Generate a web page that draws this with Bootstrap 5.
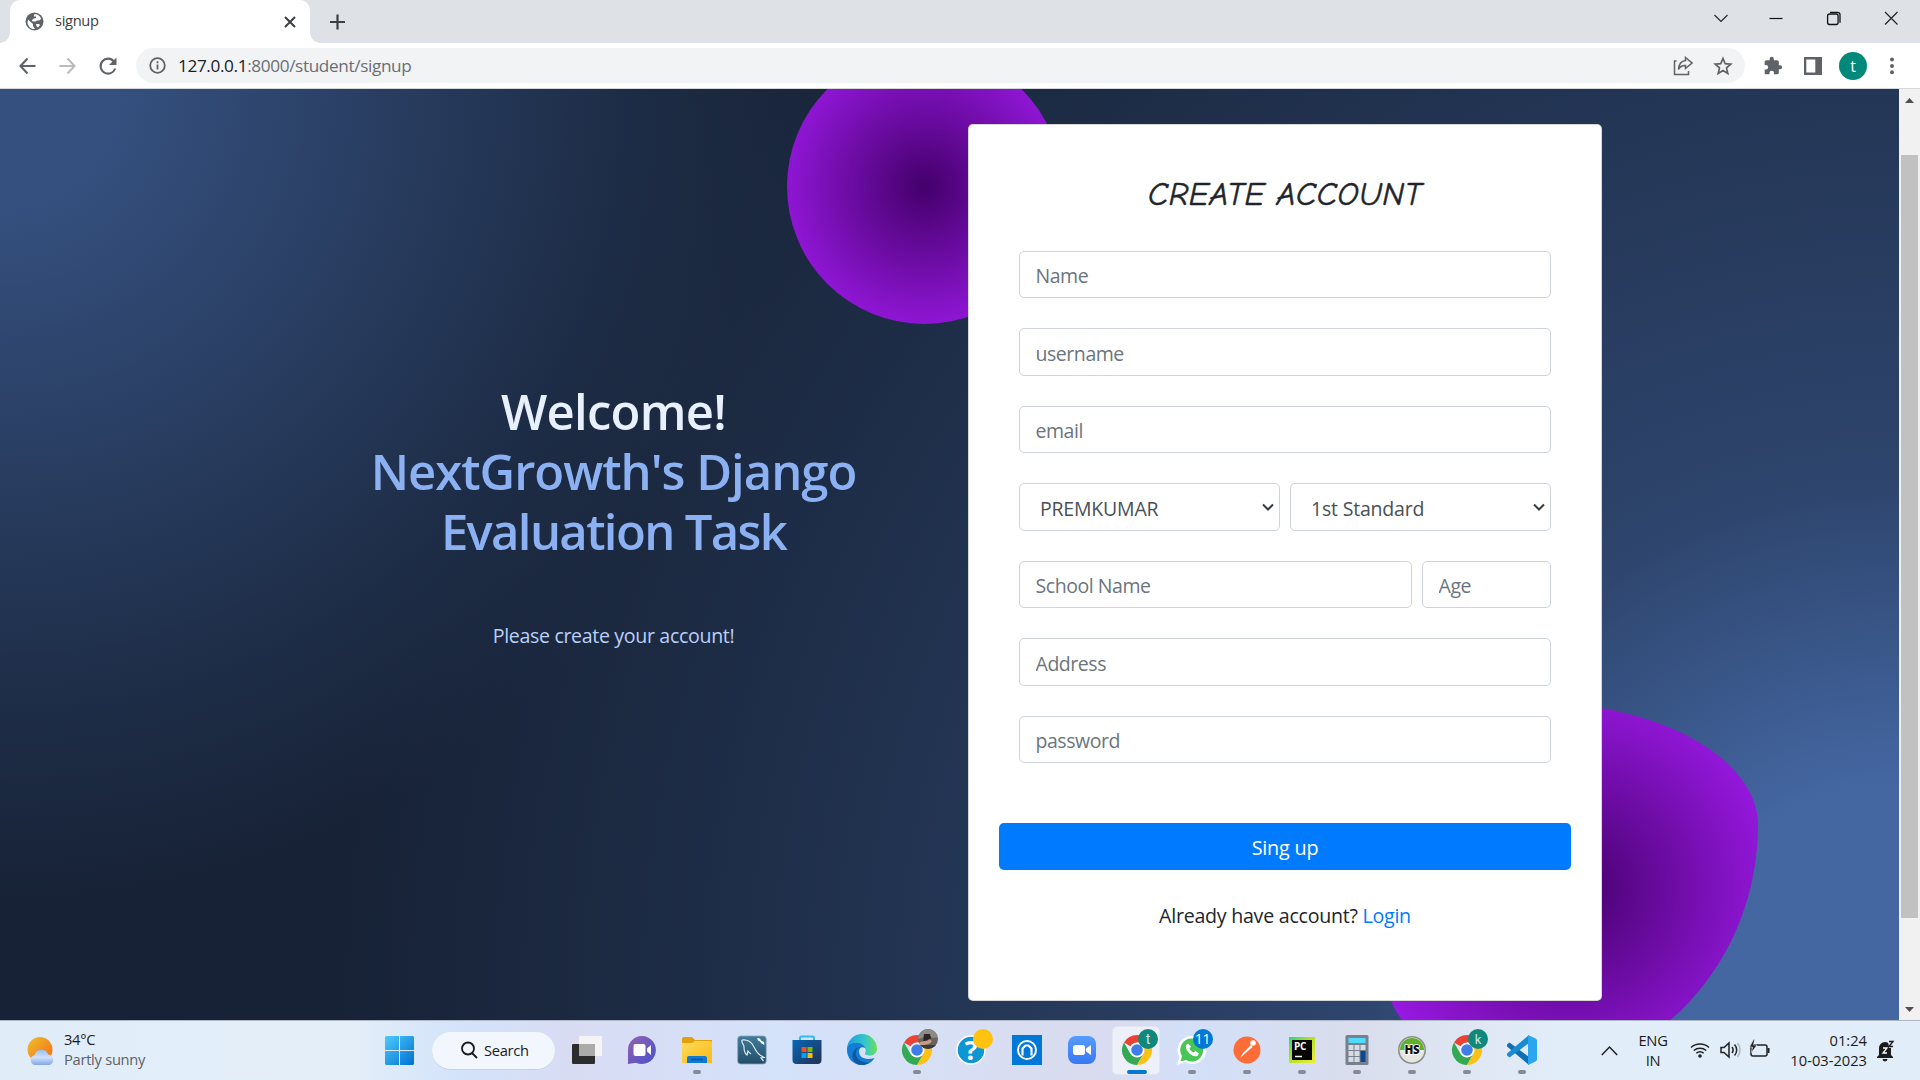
<!DOCTYPE html>
<html lang="en">
<head>
<meta charset="utf-8">
<title>signup</title>
<meta name="viewport" content="width=device-width, initial-scale=1">
<link href="https://cdn.jsdelivr.net/npm/bootstrap@5.3.0/dist/css/bootstrap.min.css" rel="stylesheet">
<style>
html{font-size:20px}
body{font-family:"Segoe UI","Open Sans",sans-serif;font-size:19.6px;letter-spacing:-.34px;width:1920px;height:1080px;overflow:hidden;background:#fff;color:#212529}
svg{display:block;flex:none}
.tabstrip{height:43px;background:#dee1e6;padding-left:10px}
.tab-active{width:300px;height:43px;background:#fff;border-radius:10px 10px 0 0;position:relative;padding:0 13px 0 15px;font-size:14.7px;color:#3c4043}
.tab-active::before,.tab-active::after{content:"";position:absolute;bottom:0;width:10px;height:10px}
.tab-active::before{left:-10px;background:radial-gradient(circle at 0 0,transparent 9.5px,#fff 10px)}
.tab-active::after{right:-10px;background:radial-gradient(circle at 100% 0,transparent 9.5px,#fff 10px)}
.tab-title{margin:-2px 0 0 11px}
.plus{margin-left:16px}
.winctl{padding-top:9px;padding-right:22px;gap:38px}
.toolbar-row{height:46px;border-bottom:1px solid #d5d7da;padding:5px 0 5px 16px}
.omni{width:1609px;height:35px;border-radius:18px;background:#f1f3f4;margin-left:17px;padding:0 12px 0 13px;font-size:17.2px;letter-spacing:-.37px;color:#6a6e73}
.omni b{font-weight:400;color:#202124}
.avatar-t{width:28px;height:28px;border-radius:50%;background:#00897b;color:#fff;font-size:16px}
.viewport-row{height:931px}
.page-view{width:1899px;overflow:hidden;background-color:hsl(218,41%,15%);
background-image:radial-gradient(812.5px circle at 0% 0%,hsl(218,41%,35%) 15%,hsl(218,41%,30%) 35%,hsl(218,41%,20%) 75%,hsl(218,41%,19%) 80%,transparent 100%),radial-gradient(1562.5px circle at 100% 100%,hsl(218,41%,45%) 15%,hsl(218,41%,30%) 35%,hsl(218,41%,20%) 75%,hsl(218,41%,19%) 80%,transparent 100%)}
.hero{padding:35px 0 0 259px}
.intro{width:709px;padding-top:257px}
.intro h1{font-size:49px;line-height:60px;font-weight:600;letter-spacing:-.75px;color:hsl(218,81%,95%);margin-bottom:60px}
.intro h1 span{color:hsl(218,81%,75%);letter-spacing:-1px}
.intro h1 .line-3{letter-spacing:-1.65px}
.intro p{color:hsl(218,81%,85%);line-height:30px}
.form-col{width:634px;height:877px}
.shape-a{position:absolute;width:275px;height:275px;top:-75px;left:-181px;border-radius:50%;background:radial-gradient(#44006b,#ad1fff)}
.shape-b{position:absolute;width:375px;height:375px;bottom:-75px;left:415px;border-radius:38% 62% 63% 37%/70% 33% 67% 30%;background:radial-gradient(#44006b,#ad1fff)}
.form-card{height:877px;border:1px solid rgba(0,0,0,.16);border-radius:5px;padding:46px 30px 0;position:relative;background:#fff}
.form-card h3{font-family:"Comic Sans MS","Comic Neue",Lato,sans-serif;font-style:italic;font-size:33px;line-height:46px;letter-spacing:.45px;-webkit-text-stroke:.5px #212529;margin:0 0 33.5px}
.fields{padding:0 20px;display:flex;flex-direction:column;gap:30px}
.fields .form-control,.fields .form-select{height:47.5px;border:1px solid #ced4da;border-radius:5px;font-size:19.5px;letter-spacing:-.45px;padding:9px 15px 6px 15.5px;color:#495057}
.fields .form-control::placeholder{color:#6c757d;opacity:1}
.fields .form-select{padding-left:20px;letter-spacing:-.2px;background-image:none}
.pick{position:relative;width:261px}
.pick svg{position:absolute;right:6px;top:20px}
.btn-sign{height:47px;border-radius:5px;background:#007bff;border:0;color:#fff;margin-top:60px;font-size:19.8px;letter-spacing:-.2px;padding:3px 0 0}
.below{margin-top:31px;line-height:30px;letter-spacing:-.25px}
.below a{color:#007bff;text-decoration:none}
.scroll-track{width:21px;background:#f1f1f1;padding:9px 2px 8px}
.scroll-thumb{width:17px;height:763px;margin-top:52px;background:#c1c1c1}
.taskbar{height:60px;border-top:1px solid #b0b8c6;background:linear-gradient(90deg,#e0edf8 0,#e3eef8 350px,#d3e3fa 460px,#d8dcf3 570px,#d4e2fa 780px,#d8dff4 960px,#d9dbee 1090px,#d3e0f9 1190px,#d9dded 1350px,#e0e9f5 1500px,#e1edf8 1560px);color:#1b1b1b;font-size:14.7px;letter-spacing:-.28px}
.wx{width:385px;padding-left:27px;gap:9px}
.wx,.clock,.lang{line-height:20px}
.wx>div{margin-top:-3px}
.clock,.lang{margin-top:-2px}
.search-pill{width:123px;height:38px;border-radius:19px;background:#f2f6fd;border-bottom:1px solid #c8d1e3;margin:0 4px 0 18px;padding-left:28px;gap:6px}
.task{width:55px;height:59px;position:relative}
.task.on::after{content:"";position:absolute;left:23.5px;top:49px;width:8px;height:4px;border-radius:2px;background:#858a95}
.task.active::before{content:"";position:absolute;left:3px;top:5px;width:48px;height:49px;border-radius:5px;background:#edf0f8;border:1px solid #e3e6f0}
.task.active::after{left:17.5px;width:20px;background:#0078d4}
.task svg{position:relative;overflow:visible;margin-top:-1px}
.lang{width:40px;margin-left:15px}
.clock{width:86px;margin-left:11px;letter-spacing:0}
</style>
</head>
<body>
<svg width="0" height="0" class="position-absolute">
<defs>
<g id="chrome"><path d="M15 15 2 7.5A15 15 0 0 1 28 7.5L15 7.5Z" fill="#ea4335"/><path d="M2 7.5A15 15 0 0 0 15 30L21.5 18.7 8.5 18.7Z" fill="#34a853"/><path d="M28 7.5A15 15 0 0 1 15 30L21.5 18.7 15 7.5Z" fill="#fbc116"/><circle cx="15" cy="15" r="7.5" fill="#fff"/><circle cx="15" cy="15" r="5.8" fill="#3f7ee8"/></g>
<linearGradient id="gw" x1="0" y1="0" x2="1" y2="1"><stop offset="0" stop-color="#4fcbfd"/><stop offset="1" stop-color="#006fd0"/></linearGradient>
<linearGradient id="gs" x1="0" y1="0" x2="1" y2="1"><stop offset="0" stop-color="#f0c030"/><stop offset="1" stop-color="#f26a10"/></linearGradient>
<linearGradient id="gc" x1="0" y1="0" x2="0" y2="1"><stop offset="0" stop-color="#9bbcf0"/><stop offset=".5" stop-color="#cfe0fb"/><stop offset="1" stop-color="#84a6e8"/></linearGradient>
<linearGradient id="gt" x1="0" y1="0" x2="1" y2="1"><stop offset="0" stop-color="#9563ae"/><stop offset="1" stop-color="#4750cf"/></linearGradient>
<linearGradient id="gf" x1="0" y1="0" x2="1" y2="1"><stop offset="0" stop-color="#ffdb61"/><stop offset="1" stop-color="#fbb911"/></linearGradient>
<linearGradient id="gst" x1="0" y1="0" x2="1" y2="1"><stop offset="0" stop-color="#0867b8"/><stop offset="1" stop-color="#25304f"/></linearGradient>
<linearGradient id="ge" x1="0" y1="0" x2="1" y2="0"><stop offset="0" stop-color="#1b9de0"/><stop offset=".6" stop-color="#35c7c9"/><stop offset="1" stop-color="#6be054"/></linearGradient>
<linearGradient id="gp" x1="0" y1="0" x2="1" y2="1"><stop offset="0" stop-color="#20d888"/><stop offset=".4" stop-color="#a9e026"/><stop offset="1" stop-color="#f3ec36"/></linearGradient>
<linearGradient id="gz" x1="0" y1="0" x2="0" y2="1"><stop offset="0" stop-color="#559cff"/><stop offset="1" stop-color="#3978f2"/></linearGradient>
<linearGradient id="gm" x1="0" y1="0" x2="0" y2="1"><stop offset="0" stop-color="#3f7c9b"/><stop offset="1" stop-color="#234e69"/></linearGradient>
</defs>
</svg>

<header>
<div class="tabstrip d-flex">
  <div class="tab-active d-flex align-items-center">
    <svg width="19" height="19" viewBox="0 0 19 19"><circle cx="9.5" cy="9.5" r="9" fill="#5f6368"/><path d="M3 7.500 8 12v2l2 3c-4 .5-7-2.500-7.500-6zM9 2.500c3-.8 6 1 7.200 4.500L14 8.500h-2l-1.500 1h-3L7 8l2-1.500 2-.5V4.500H9zM11 12h3l1 1-2 2.500-1.500-1z" fill="#fff"/></svg>
    <span class="tab-title flex-grow-1">signup</span>
    <svg width="14" height="14" viewBox="0 0 14 14" stroke="#3c4043" stroke-width="2"><path d="M2 2l10 10M12 2 2 12"/></svg>
  </div>
  <svg class="plus align-self-center" width="24" height="16" viewBox="0 0 24 16" stroke="#3c4043" stroke-width="2.200"><path d="M11.500 .5v15M4 8h15"/></svg>
  <div class="winctl d-flex ms-auto">
    <svg style="margin-right:3px" width="14" height="18" viewBox="0 0 14 18" fill="none" stroke="#222" stroke-width="1.100"><path d="M.5 6 7 12.500 13.500 6"/></svg>
    <svg style="margin-right:3px" width="14" height="18" viewBox="0 0 14 18" stroke="#111" stroke-width="1.200"><path d="M.5 9.500h13"/></svg>
    <svg width="20" height="18" viewBox="0 0 20 18" fill="none" stroke="#111" stroke-width="1.300"><rect x="3.600" y="5" width="10.500" height="10.500" rx="2"/><path d="M6 3.300h7.500a2.500 2.500 0 0 1 2.500 2.500v8"/></svg>
    <svg width="16" height="18" viewBox="0 0 16 18" stroke="#222" stroke-width="1.200"><path d="M3 3l12.500 12.500M15.500 3 3 15.500"/></svg>
  </div>
</div>
<div class="toolbar-row d-flex align-items-center">
  <svg width="103" height="24" viewBox="0 0 103 24" fill="none" stroke="#5f6368" stroke-width="2.100"><path d="M19.500 12H4.500M11.500 4.500 4.500 12l7 7.500"/><path stroke="#babcbe" d="M43.500 12h15M51.500 4.500l7 7.500-7 7.500"/><path d="M98 7.500a7.500 7.500 0 1 0 1.200 7"/><path fill="#5f6368" stroke="none" d="M100.500 3.500v7.500H93z"/></svg>
  <div class="omni d-flex align-items-center">
    <svg width="17" height="17" viewBox="0 0 17 17" fill="none" stroke="#5f6368" stroke-width="1.800"><circle cx="8.500" cy="8.500" r="7.300"/><path d="M8.500 7.500v5M8.500 4.300v1.900"/></svg>
    <span class="flex-grow-1" style="margin-left:12px"><b>127.0.0.1</b>:8000/student/signup</span>
    <svg width="20" height="20" viewBox="0 0 20 20" fill="none" stroke="#5f6368" stroke-width="1.500"><path d="M3.500 5H1.500v13.500h14V15"/><path d="M12.500 1.500 19 7l-6.500 5.500V9.500C9 9.300 7 10.500 5.500 13.500 5.800 8.500 8.500 5 12.500 4.500z"/></svg>
    <svg style="margin-left:20px" width="20" height="20" viewBox="0 0 20 20" fill="none" stroke="#5f6368" stroke-width="1.700"><path d="m10 2.500 2.200 5.200 5.600.5-4.300 3.700 1.300 5.500L10 14.500l-4.800 2.900 1.300-5.500L2.200 8.200l5.600-.5z"/></svg>
  </div>
  <svg style="margin-left:18px" width="20" height="20" viewBox="0 0 24 24" fill="#5f6368"><path d="M20.500 11H19V7a2 2 0 0 0-2-2h-4V3.500a2.500 2.500 0 0 0-5 0V5H4a2 2 0 0 0-2 2v3.800h1.500a2.700 2.700 0 0 1 0 5.400H2V20c0 1.100.9 2 2 2h3.800v-1.500a2.700 2.700 0 0 1 5.400 0V22H17a2 2 0 0 0 2-2v-4h1.500a2.500 2.500 0 0 0 0-5z"/></svg>
  <svg style="margin-left:21px" width="18" height="18" viewBox="0 0 18 18"><path d="M0 0h18v18H0zM2.300 2.500v13h9v-13z" fill="#5f6368" fill-rule="evenodd"/></svg>
  <div class="avatar-t d-flex align-items-center justify-content-center" style="margin-left:17px">t</div>
  <svg style="margin-left:22px" width="6" height="18" viewBox="0 0 6 18" fill="#5f6368"><circle cx="3" cy="2.500" r="2"/><circle cx="3" cy="9" r="2"/><circle cx="3" cy="15.300" r="2"/></svg>
</div>
</header>

<main class="viewport-row d-flex">
<div class="page-view">
<section class="hero d-flex">
  <div class="intro text-center">
    <h1>Welcome!<br><span>NextGrowth's Django</span><br><span class="line-3">Evaluation Task</span></h1>
    <p>Please create your account!</p>
  </div>
  <div class="form-col position-relative">
    <div class="shape-a"></div>
    <div class="shape-b"></div>
    <form class="form-card text-center">
      <h3>CREATE ACCOUNT</h3>
      <div class="fields">
        <input class="form-control" placeholder="Name">
        <input class="form-control" placeholder="username">
        <input class="form-control" placeholder="email">
        <div class="d-flex justify-content-between">
          <div class="pick"><select class="form-select"><option>PREMKUMAR</option></select><svg width="12" height="9" viewBox="0 0 12 9" fill="none" stroke="#343a40" stroke-width="2"><path d="m1 1.500 5 5 5-5"/></svg></div>
          <div class="pick"><select class="form-select"><option>1st Standard</option></select><svg width="12" height="9" viewBox="0 0 12 9" fill="none" stroke="#343a40" stroke-width="2"><path d="m1 1.500 5 5 5-5"/></svg></div>
        </div>
        <div class="d-flex" style="gap:10px">
          <input class="form-control" placeholder="School Name">
          <input class="form-control flex-shrink-0" style="width:129px" placeholder="Age">
        </div>
        <input class="form-control" placeholder="Address">
        <input class="form-control" placeholder="password">
      </div>
      <button type="button" class="btn btn-sign w-100">Sing up</button>
      <div class="below">Already have account? <a href="#">Login</a></div>
    </form>
  </div>
</section>
</div>
<div class="scroll-track d-flex flex-column align-items-center">
  <svg width="9" height="5" viewBox="0 0 9 5" fill="#505050"><path d="M0 5 4.500 0 9 5z"/></svg>
  <div class="scroll-thumb"></div>
  <svg class="mt-auto" width="9" height="5" viewBox="0 0 9 5" fill="#505050"><path d="M0 0l4.500 5L9 0z"/></svg>
</div>
</main>

<footer class="taskbar d-flex align-items-center">
  <div class="wx d-flex align-items-center">
    <svg width="28" height="28" viewBox="0 0 28 28"><circle cx="13" cy="12.500" r="12.500" fill="url(#gs)"/><path d="M8 28a5 5 0 0 1-.5-9.800 7.200 7.200 0 0 1 13.800-.7A5.400 5.400 0 0 1 22.500 28z" fill="url(#gc)"/></svg>
    <div>34°C<br><span style="color:#5c6168">Partly sunny</span></div>
  </div>
  <svg width="29" height="29" viewBox="0 0 29 29"><path d="M1 0h13v14H0V1zM15 0h13l1 1v13H15zM0 15h14v14H1l-1-1zM15 15h14v13l-1 1H15z" fill="url(#gw)"/></svg>
  <div class="search-pill d-flex align-items-center">
    <svg width="18" height="18" viewBox="0 0 18 18" fill="none" stroke="#1b1b1b" stroke-width="1.800"><circle cx="8" cy="7.500" r="6"/><path d="m12 12 5 5"/></svg><span>Search</span>
  </div>
  <div class="d-flex">
    <div class="task d-flex align-items-center justify-content-center"><svg width="30" height="30"><rect x="0" y="9" width="23" height="20" rx="1" fill="#2c2c2c"/><rect x="7" y="1" width="23" height="20" rx="1" fill="#f4f4f5"/><rect x="7" y="9" width="16" height="12" fill="#ababab"/></svg></div>
    <div class="task d-flex align-items-center justify-content-center"><svg width="30" height="30"><path d="M15 1a14 14 0 1 1-6 26.700L1 29V15A14 14 0 0 1 15 1z" fill="url(#gt)"/><rect x="6.500" y="9" width="12" height="12" rx="2" fill="#fff"/><path d="m20 13.500 4-3.500v10l-4-3.500z" fill="#fff"/></svg></div>
    <div class="task on d-flex align-items-center justify-content-center"><svg width="30" height="30"><path d="M0 4a2 2 0 0 1 2-2h8l3 3h17v6H0z" fill="#e2a00b"/><path d="M0 8h10l3-2h15a2 2 0 0 1 2 2v20H0z" fill="url(#gf)"/><path d="M5 28v-5a2 2 0 0 1 2-2h16a2 2 0 0 1 2 2v5z" fill="#0f7ad2"/><path d="M9 24.500h12" stroke="#0a569e" stroke-width="1.500"/></svg></div>
    <div class="task d-flex align-items-center justify-content-center"><svg width="30" height="30"><rect x=".7" y="1" width="28.500" height="28" rx="3" fill="url(#gm)" stroke="#8aa5b8" stroke-width=".8"/><path d="M5 5c5-1 10 2 12 7 2 4 3 6 6 8l4 2.500-3 .5 2.500 3M5 5c-1 3 2 4 2 7 0 3 0 6 3 8l1-4c1 1.500 2 2.500 3 3" fill="none" stroke="#dde8ef" stroke-width="1.200"/><path d="m20 3 3 .5 1 2 3 1.500.5 3-3-1.500-1.500-2-2-1z" fill="#fff"/></svg></div>
    <div class="task d-flex align-items-center justify-content-center"><svg width="30" height="30"><path d="M8 6V3a1.500 1.500 0 0 1 1.500-1.500h11A1.500 1.500 0 0 1 22 3v3" fill="none" stroke="#31bdec" stroke-width="2"/><path d="M.5 5h29v20a4 4 0 0 1-4 4h-21a4 4 0 0 1-4-4z" fill="url(#gst)"/><path fill="#f25022" d="M9.500 12h5v5h-5z"/><path fill="#7fba00" d="M15.500 12h5v5h-5z"/><path fill="#00a4ef" d="M9.500 18h5v5h-5z"/><path fill="#ffb900" d="M15.500 18h5v5h-5z"/></svg></div>
    <div class="task d-flex align-items-center justify-content-center"><svg width="30" height="30"><path d="M0 14A15 15 0 0 1 30 14c0 4-3 6.500-7 6.500-4 0-5.500-1-5-2.500 2-2 .5-7-5-7-7 0-11 3-13 3z" fill="url(#ge)"/><path d="M0 14c1-4.500 5-6 9-6 5 0 8 2 9 5-3-2-6 0-6 3.500 0 6 6 9 15.500 6.500C25 27.500 20 30 15 30 6 30-.5 23 0 14z" fill="#147cd4"/><path d="M12.500 12C8 14 8 20 11 24c3 3 7 4 11 3.700C20 29.500 17 30 15 30 9 30 5 25 5.500 20c.5-4 3-7 7-8z" fill="#0f579f"/></svg></div>
    <div class="task on d-flex align-items-center justify-content-center"><svg width="30" height="30"><use href="#chrome"/><clipPath id="face"><circle cx="26" cy="4" r="10"/></clipPath><g clip-path="url(#face)"><path fill="#67635f" d="M16-6h20v20H16z"/><path d="M16-6h20v8l-5 1-7-3-4 3-4 1z" fill="#8f8a86"/><path d="M22-1l6 0 1 4-3 4-5 1z" fill="#2e2528"/><path d="M17 8c4-3 8-1 10-4l3 2c-2 4-6 3-12 5z" fill="#c49b84"/><path d="M18 10h16v5H18z" fill="#3e3a3c"/></g></svg></div>
    <div class="task d-flex align-items-center justify-content-center"><svg width="30" height="30"><circle cx="14" cy="15" r="14" fill="#0d96d1" stroke="#fff" stroke-width="1.500"/><text x="14" y="25" font-size="27" font-weight="700" font-family="Open Sans" text-anchor="middle" fill="#fff">?</text><circle cx="26" cy="4" r="10" fill="#ffc20e"/></svg></div>
    <div class="task d-flex align-items-center justify-content-center"><svg width="30" height="30"><path d="M0 0h30v30H0z" fill="#0078d7"/><circle cx="15" cy="15" r="9" fill="none" stroke="#fff" stroke-width="2"/><path d="M10.500 20.500v-7l3-3h3l3 3v7" fill="none" stroke="#fff" stroke-width="2.200"/><path d="M13 23v-7l2-1.500 2 1.500v7z" fill="#0078d7"/></svg></div>
    <div class="task d-flex align-items-center justify-content-center"><svg width="30" height="30"><rect x="1" y="1" width="28" height="28" rx="8" fill="url(#gz)"/><rect x="6" y="10" width="12" height="10" rx="2.500" fill="#fff"/><path d="m19 13.500 5-3.500v10l-5-3.500z" fill="#fff"/></svg></div>
    <div class="task on active d-flex align-items-center justify-content-center"><svg width="30" height="30"><use href="#chrome"/><circle cx="26" cy="4" r="10" fill="#10887b"/><text x="26" y="9" font-size="14" font-family="Roboto" text-anchor="middle" fill="#c8e8e2">t</text></svg></div>
    <div class="task on d-flex align-items-center justify-content-center"><svg width="30" height="30"><path d="M15 1a14 14 0 1 1-7 26L0 30l2.500-8A14 14 0 0 1 15 1z" fill="#fff"/><path d="M15 3.500a11.500 11.500 0 1 1-6 21.500l-5.500 1.500L5 21A11.500 11.500 0 0 1 15 3.500z" fill="#45c655"/><path d="M11 8.500 9 10c-1.500 5 6 13 11.500 11l1.500-2.500-3.500-2.500-2 1.500c-2-.8-3.500-2.500-4-4l1.500-2z" fill="#fff"/><circle cx="26" cy="4" r="10" fill="#0078d7"/><text x="25.500" y="9" font-size="14" font-family="Open Sans" text-anchor="middle" fill="#fff">11</text></svg></div>
    <div class="task on d-flex align-items-center justify-content-center"><svg width="30" height="30"><circle cx="15" cy="15" r="13.500" fill="#ff6c37"/><circle cx="21" cy="8" r="2.800" fill="#fff"/><path d="m8 23 3-5 8-8 1.500 2-8 7z" fill="#fff"/></svg></div>
    <div class="task on d-flex align-items-center justify-content-center"><svg width="30" height="30"><path d="M2 2h26v26H2z" fill="url(#gp)"/><path d="M5 5h20v20H5z" fill="#050505"/><text x="7" y="15" font-size="10" font-weight="700" font-family="Open Sans" fill="#fff">PC</text><path d="M8 21.500h7" stroke="#fff" stroke-width="1.500"/></svg></div>
    <div class="task on d-flex align-items-center justify-content-center"><svg width="30" height="30"><rect x="3.500" width="23" height="30" rx="1.500" fill="#76818d"/><path fill="#50dcff" d="M6.500 3h17v5h-17z"/><path fill="#d7dce2" d="M6.500 10h5v5h-5zM12.500 10h5v5h-5zM18.500 10h5v5h-5zM6.500 16h5v5h-5zM12.500 16h5v5h-5zM6.500 22h5v5h-5zM12.500 22h5v5h-5z"/><path fill="#0b4a91" d="M18.500 16h5v11h-5z"/></svg></div>
    <div class="task on d-flex align-items-center justify-content-center"><svg width="30" height="30"><circle cx="15" cy="15" r="13.200" fill="#e6e7e3" stroke="#8b918b" stroke-width="1.600"/><path d="M3 15a12 12 0 0 1 24 0z" fill="#5fb02a"/><text x="15" y="19" font-size="11.500" font-weight="800" font-family="Open Sans" text-anchor="middle" fill="#111" stroke="#fff" stroke-width="1.500" paint-order="stroke">HS</text></svg></div>
    <div class="task on d-flex align-items-center justify-content-center"><svg width="30" height="30"><use href="#chrome"/><circle cx="26" cy="4" r="10" fill="#10887b"/><text x="26" y="9" font-size="13" font-family="Roboto" text-anchor="middle" fill="#c8e8e2">k</text></svg></div>
    <div class="task on d-flex align-items-center justify-content-center"><svg width="30" height="30"><path d="m0 9.500 2.500-2L22 22v8L0 11.500z" fill="#0f6fb3"/><path d="m0 20.500 2.500 2L22 8V0L0 18.500z" fill="#1a8ad2"/><path d="m21 0 7.500 3.500L30 5v20l-1.500 1.500L21 30z" fill="#2aa5ef"/></svg></div>
  </div>
  <svg style="margin-left:52px" width="17" height="12" viewBox="0 0 17 12" fill="none" stroke="#222" stroke-width="1.500"><path d="m.8 10 7.700-8 7.700 8"/></svg>
  <div class="lang text-center">ENG<br>IN</div>
  <svg style="margin-left:17px;margin-top:-2px" width="80" height="22" viewBox="0 0 80 22" fill="none" stroke="#222" stroke-width="1.500"><path d="M1 8.500a13.500 13.500 0 0 1 18 0M3.800 11.500a9.500 9.500 0 0 1 12.400 0M6.300 14.300a5.500 5.500 0 0 1 7.400 0"/><circle cx="10" cy="17" r="1.800" fill="#222" stroke="none"/><path d="M31 8.500h3l5-4.500v14l-5-4.500h-3zM42 8a5 5 0 0 1 0 6M44.500 5.500a8 8 0 0 1 0 11"/><path stroke="#aeb6bf" d="M47.500 4a11 11 0 0 1 0 14"/><rect x="61" y="6" width="16" height="11" rx="2"/><path d="M78.500 9v5" stroke-width="2"/><path d="m63.500 .5-4 7.500h3l-1 5.500 5.500-7.500h-3.500l1-5.500z" fill="#222" stroke="#e2edf8" stroke-width=".6"/></svg>
  <div class="clock text-end">01:24<br>10-03-2023</div>
  <svg style="margin-left:9px" width="20" height="22" viewBox="0 0 20 22"><path d="M3 15V8a6 6 0 0 1 12 0v7l2 2v1H1v-1zM6.500 19h5a2.500 2.500 0 0 1-5 0z" fill="#1b1b1b"/><path d="M7 8h4l-4 5h4" stroke="#fff" stroke-width="1.300" fill="none"/><path d="M12 0h6v8h-5z" fill="#e1edf8"/><path d="M13 1.500h4l-4 5h4" stroke="#1b1b1b" stroke-width="1.400" fill="none"/></svg>
</footer>
<script src="https://cdn.jsdelivr.net/npm/bootstrap@5.3.0/dist/js/bootstrap.bundle.min.js"></script>
</body>
</html>
